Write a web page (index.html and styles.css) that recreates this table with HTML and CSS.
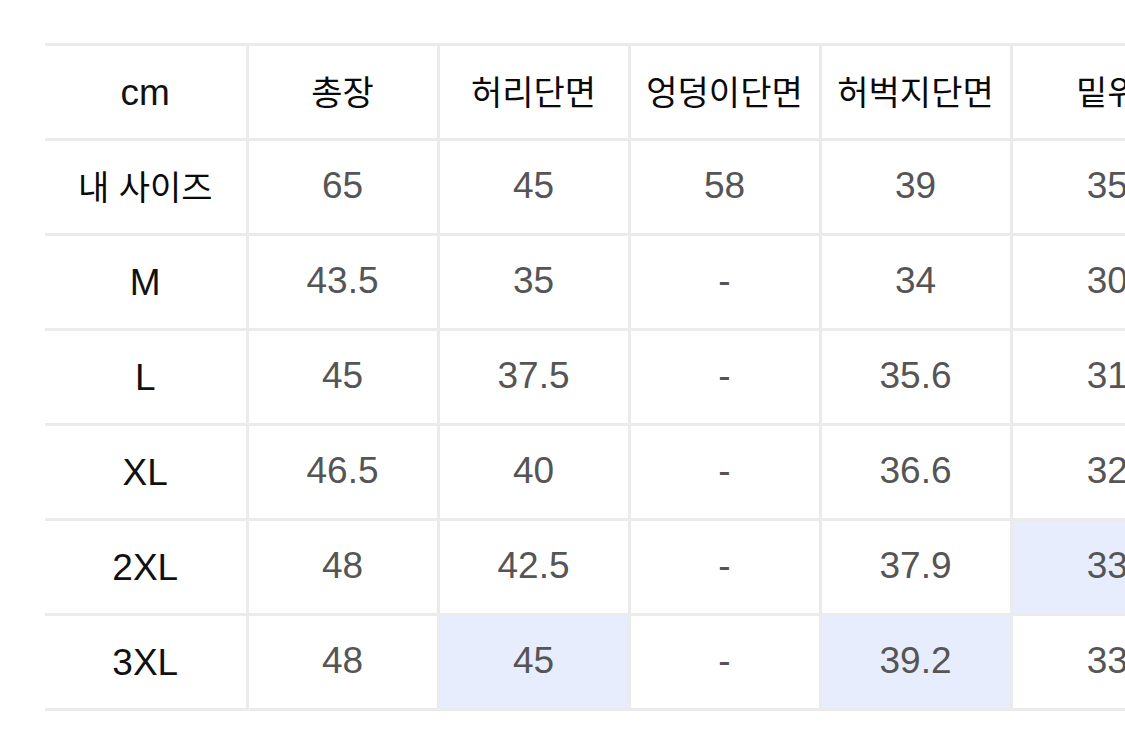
FILE: index.html
```html
<!DOCTYPE html>
<html lang="ko">
<head>
<meta charset="utf-8">
<title>사이즈 표</title>
<link rel="stylesheet" href="styles.css">
</head>
<body>
<table class="size-table">
  <colgroup>
    <col class="col-label">
    <col class="col-val"><col class="col-val"><col class="col-val"><col class="col-val"><col class="col-val">
  </colgroup>
  <thead>
    <tr>
      <th class="label">cm</th>
      <th class="ko">총장</th>
      <th class="ko">허리단면</th>
      <th class="ko">엉덩이단면</th>
      <th class="ko">허벅지단면</th>
      <th class="ko">밑위</th>
    </tr>
  </thead>
  <tbody>
    <tr>
      <th class="label ko">내 사이즈</th>
      <td>65</td><td>45</td><td>58</td><td>39</td><td>35</td>
    </tr>
    <tr>
      <th class="label">M</th>
      <td>43.5</td><td>35</td><td>-</td><td>34</td><td>30</td>
    </tr>
    <tr>
      <th class="label">L</th>
      <td>45</td><td>37.5</td><td>-</td><td>35.6</td><td>31</td>
    </tr>
    <tr>
      <th class="label">XL</th>
      <td>46.5</td><td>40</td><td>-</td><td>36.6</td><td>32</td>
    </tr>
    <tr>
      <th class="label">2XL</th>
      <td>48</td><td>42.5</td><td>-</td><td>37.9</td><td class="hl">33</td>
    </tr>
    <tr>
      <th class="label">3XL</th>
      <td>48</td><td class="hl">45</td><td>-</td><td class="hl">39.2</td><td>33</td>
    </tr>
  </tbody>
</table>
</body>
</html>
```
FILE: styles.css
```css
html, body {
  margin: 0;
  padding: 0;
  background: #ffffff;
  overflow: hidden;
}
body {
  width: 1125px;
  height: 740px;
  font-family: "Liberation Sans", "Noto Sans CJK KR", Arial, sans-serif;
}
.size-table {
  margin: 43px 0 0 45px;
  border-collapse: collapse;
  table-layout: fixed;
  width: 1157px;
}
.col-label { width: 202px; }
.col-val { width: 191px; }
.size-table th,
.size-table td {
  height: 88px;
  padding: 0 0 4px;
  border: 3px solid #ebebeb;
  text-align: center;
  vertical-align: middle;
  white-space: nowrap;
  overflow: hidden;
}
.size-table tr > :first-child {
  border-left: none;
}
.size-table tr > :last-child {
  border-right: none;
}
.size-table th {
  font-weight: 400;
  color: #111111;
  font-size: 37px;
  padding: 3px 0 1px;
}
.size-table th.ko {
  font-size: 34px;
  font-weight: 400;
  font-family: "Noto Sans CJK KR", "Liberation Sans", sans-serif;
  color: #0a0a0a;
  padding: 0 0 4px;
}
.size-table td {
  font-size: 37px;
  color: #555555;
  padding: 1px 0 3px;
}
.size-table td.hl {
  background: #e7edfc;
}
```
